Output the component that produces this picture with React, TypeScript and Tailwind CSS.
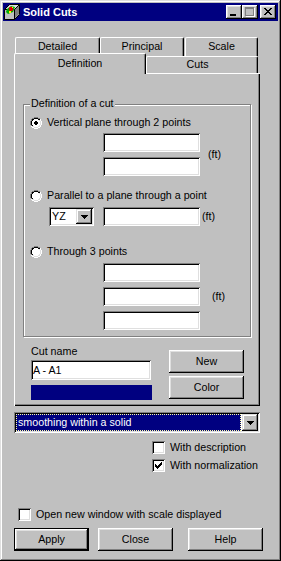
import React from "react";

type PixProps = { rows: string[]; colors: Record<string, string>; className?: string };

function Pix({ rows, colors, className }: PixProps) {
  const w = rows[0].length;
  const h = rows.length;
  const rects: React.ReactNode[] = [];
  rows.forEach((r, y) =>
    r.split("").forEach((c, x) => {
      if (colors[c]) rects.push(<rect key={x + "-" + y} x={x} y={y} width={1} height={1} fill={colors[c]} />);
    })
  );
  return (
    <svg width={w} height={h} viewBox={`0 0 ${w} ${h}`} shapeRendering="crispEdges" className={className}>
      {rects}
    </svg>
  );
}

const C = { K: "#000000", G: "#808080", W: "#ffffff", L: "#dfdfdf", w: "#ffffff" };

const radioOff = [
  "....GGGG....",
  "..GGKKKKGG..",
  ".GKKwwwwKKW.",
  ".GKwwwwwwLW.",
  "GKwwwwwwwwLW",
  "GKwwwwwwwwLW",
  "GKwwwwwwwwLW",
  "GKwwwwwwwwLW",
  ".GKwwwwwwLW.",
  ".WLLwwwwLLW.",
  "..WWLLLLWW..",
  "....WWWW....",
];
const radioOn = [
  "....GGGG....",
  "..GGKKKKGG..",
  ".GKKwwwwKKW.",
  ".GKwwwwwwLW.",
  "GKwwwKKwwwLW",
  "GKwwKKKKwwLW",
  "GKwwKKKKwwLW",
  "GKwwwKKwwwLW",
  ".GKwwwwwwLW.",
  ".WLLwwwwLLW.",
  "..WWLLLLWW..",
  "....WWWW....",
];

const checkRows = [
  "......K",
  ".....KK",
  "K...KKK",
  "KK.KKK.",
  "KKKKK..",
  ".KKK...",
  "..K....",
];

const arrowRows = ["KKKKKKK", ".KKKKK.", "..KKK..", "...K..."];

const minRows = [
  "................",
  "................",
  "................",
  "................",
  "................",
  "................",
  "................",
  "................",
  "................",
  "....KKKKKK......",
  "....KKKKKK......",
  "................",
  "................",
  "................",
];
const maxRows = [
  "................",
  "................",
  "...GGGGGGGGG....",
  "...GGGGGGGGGW...",
  "...G.......GW...",
  "...G.......GW...",
  "...G.......GW...",
  "...G.......GW...",
  "...G.......GW...",
  "...G.......GW...",
  "...GGGGGGGGGW...",
  "....WWWWWWWWW...",
  "................",
  "................",
];
const closeRows = [
  "................",
  "................",
  "................",
  "....KK....KK....",
  ".....KK..KK.....",
  "......KKKK......",
  ".......KK.......",
  "......KKKK......",
  ".....KK..KK.....",
  "....KK....KK....",
  "................",
  "................",
  "................",
  "................",
];

function Radio({ checked }: { checked?: boolean }) {
  return <Pix rows={checked ? radioOn : radioOff} colors={C} className="mt-[1px] shrink-0" />;
}

function CheckBox({ checked }: { checked?: boolean }) {
  return (
    <div className="w-[13px] h-[13px] shrink-0 bg-white shadow-[inset_1px_1px_0_#808080,inset_-1px_-1px_0_#fff,inset_2px_2px_0_#000,inset_-2px_-2px_0_#dfdfdf] pl-[3px] pt-[3px]">
      {checked && <Pix rows={checkRows} colors={C} className="block" />}
    </div>
  );
}

function Field({ children }: { children?: React.ReactNode }) {
  return (
    <div className="w-[97px] h-[19px] bg-white shadow-[inset_1px_1px_0_#808080,inset_-1px_-1px_0_#fff,inset_2px_2px_0_#000,inset_-2px_-2px_0_#dfdfdf] flex items-center pl-[2px]">
      {children}
    </div>
  );
}

function AppIcon() {
  return (
    <svg width="16" height="16" viewBox="0 0 16 16" className="shrink-0">
      <polygon points="0.5,5.5 5.5,0.5 15.5,0.5 15.5,10.5 10.5,15.5 0.5,15.5" fill="#c0c0c0" stroke="#000" />
      <polygon points="1,6 6,1 15,1 10,6" fill="#e0e0e0" />
      <polygon points="10,6 15,1 15,10 10,15" fill="#808080" />
      <polyline points="0.5,5.5 10.5,5.5 15.5,0.5" fill="none" stroke="#000" />
      <line x1="10.5" y1="5.5" x2="10.5" y2="15.5" stroke="#000" />
      <polygon points="3,5 7,2 11,3 9,8 4,10 2,8" fill="#00b000" />
      <circle cx="7" cy="5" r="2.2" fill="#e00000" />
      <rect x="5" y="7" width="2" height="2" fill="#ffff00" />
      <rect x="8" y="3" width="1" height="1" fill="#ffff00" />
    </svg>
  );
}

export default function App() {
  return (
    <div className="w-[281px] h-[561px] bg-[#c0c0c0] p-[3px] flex flex-col text-[10.7px] leading-[13px] text-black font-['Liberation_Sans',Arial,sans-serif] shadow-[inset_-1px_-1px_0_#000,inset_1px_1px_0_#dfdfdf,inset_-2px_-2px_0_#808080,inset_2px_2px_0_#fff] overflow-hidden">
      {/* Title bar */}
      <div className="h-[18px] shrink-0 bg-[#000080] flex items-center pl-[1px] pr-[2px]">
        <AppIcon />
        <span className="ml-[3px] text-white font-bold text-[11px]">Solid Cuts</span>
        <div className="ml-auto flex items-center">
          <div className="w-[16px] h-[14px] bg-[#c0c0c0] shadow-[inset_-1px_-1px_0_#000,inset_1px_1px_0_#fff,inset_-2px_-2px_0_#808080,inset_2px_2px_0_#dfdfdf]">
            <Pix rows={minRows} colors={C} className="block" />
          </div>
          <div className="w-[16px] h-[14px] bg-[#c0c0c0] shadow-[inset_-1px_-1px_0_#000,inset_1px_1px_0_#fff,inset_-2px_-2px_0_#808080,inset_2px_2px_0_#dfdfdf]">
            <Pix rows={maxRows} colors={C} className="block" />
          </div>
          <div className="ml-[2px] w-[16px] h-[14px] bg-[#c0c0c0] shadow-[inset_-1px_-1px_0_#000,inset_1px_1px_0_#fff,inset_-2px_-2px_0_#808080,inset_2px_2px_0_#dfdfdf]">
            <Pix rows={closeRows} colors={C} className="block" />
          </div>
        </div>
      </div>

      {/* Tabs back row */}
      <div className="mt-[16px] ml-[12px] flex h-[19px] shrink-0">
        <div className="w-[85px] h-full bg-[#c0c0c0] border-t border-l border-t-white border-l-white border-r border-r-black shadow-[inset_-1px_0_0_#808080] rounded-t-[2px] flex justify-center pt-[2px]">
          Detailed
        </div>
        <div className="w-[84px] h-full bg-[#c0c0c0] border-t border-l border-t-white border-l-white border-r border-r-black shadow-[inset_-1px_0_0_#808080] rounded-t-[2px] flex justify-center pt-[2px]">
          Principal
        </div>
        <div className="ml-[1px] w-[73px] h-full bg-[#c0c0c0] border-t border-l border-t-white border-l-white border-r border-r-black shadow-[inset_-1px_0_0_#808080] rounded-t-[2px] flex justify-center pt-[2px]">
          Scale
        </div>
      </div>
      {/* Tabs front row */}
      <div className="-mt-[3px] ml-[11px] flex items-start h-[20px] shrink-0">
        <div className="relative z-10 w-[132px] h-[21px] bg-[#c0c0c0] border-t border-l border-t-white border-l-white border-r border-r-black shadow-[inset_-1px_0_0_#808080] rounded-t-[2px] flex justify-center pt-[3px]">
          Definition
        </div>
        <div className="mt-[3px] w-[112px] h-[17px] bg-[#c0c0c0] border-t border-l border-t-white border-l-white border-r border-r-black shadow-[inset_-1px_0_0_#808080] rounded-t-[2px] flex justify-center pt-[1px] pr-[9px]">
          Cuts
        </div>
      </div>

      {/* Tab panel */}
      <div className="ml-[11px] w-[246px] h-[333px] shrink-0 flex flex-col shadow-[inset_1px_1px_0_#fff,inset_-1px_-1px_0_#000,inset_-2px_-2px_0_#808080]">
        <div className="relative ml-[9px] mt-[31px] w-[228px] h-[233px] border border-[#808080] shadow-[1px_1px_0_#fff,inset_1px_1px_0_#fff] pt-[11px] pl-[6px] flex flex-col">
          <span className="absolute left-[6px] -top-[8px] px-[1px] bg-[#c0c0c0]">Definition of a cut</span>

          <div className="flex items-start h-[13px]">
            <Radio checked />
            <span className="ml-[5px]">Vertical plane through 2 points</span>
          </div>
          <div className="mt-[4px] flex items-center">
            <div className="ml-[73px] flex flex-col gap-[5px]">
              <Field />
              <Field />
            </div>
            <span className="ml-[8px]">(ft)</span>
          </div>

          <div className="mt-[13px] flex items-start h-[13px]">
            <Radio />
            <span className="ml-[5px]">Parallel to a plane through a point</span>
          </div>
          <div className="mt-[5px] flex items-center">
            <div className="ml-[19px] w-[45px] h-[19px] bg-white shadow-[inset_1px_1px_0_#808080,inset_-1px_-1px_0_#fff,inset_2px_2px_0_#000,inset_-2px_-2px_0_#dfdfdf] p-[2px] flex items-center">
              <span className="pl-[1px]">YZ</span>
              <div className="ml-auto w-[16px] h-full bg-[#c0c0c0] shadow-[inset_-1px_-1px_0_#000,inset_1px_1px_0_#dfdfdf,inset_-2px_-2px_0_#808080,inset_2px_2px_0_#fff] flex items-center justify-center">
                <Pix rows={arrowRows} colors={C} className="block" />
              </div>
            </div>
            <div className="ml-[9px]">
              <Field />
            </div>
            <span className="ml-[2px]">(ft)</span>
          </div>

          <div className="mt-[19px] flex items-start h-[13px]">
            <Radio />
            <span className="ml-[5px]">Through 3 points</span>
          </div>
          <div className="mt-[5px] flex items-center">
            <div className="ml-[73px] flex flex-col gap-[5px]">
              <Field />
              <Field />
              <Field />
            </div>
            <span className="ml-[12px]">(ft)</span>
          </div>
        </div>

        <div className="ml-[17px] flex">
          <div className="flex flex-col pt-[8px]">
            <span>Cut name</span>
            <div className="mt-[2px] w-[120px] h-[20px] bg-white shadow-[inset_1px_1px_0_#808080,inset_-1px_-1px_0_#fff,inset_2px_2px_0_#000,inset_-2px_-2px_0_#dfdfdf] flex items-center pl-[2px]">
              A - A1
            </div>
            <div className="mt-[5px] w-[121px] h-[15px] bg-[#000080]" />
          </div>
          <div className="ml-[17px] flex flex-col gap-[3px] pt-[13px]">
            <div className="w-[75px] h-[23px] bg-[#c0c0c0] shadow-[inset_-1px_-1px_0_#000,inset_1px_1px_0_#fff,inset_-2px_-2px_0_#808080,inset_2px_2px_0_#dfdfdf] flex items-center justify-center">
              New
            </div>
            <div className="w-[75px] h-[23px] bg-[#c0c0c0] shadow-[inset_-1px_-1px_0_#000,inset_1px_1px_0_#fff,inset_-2px_-2px_0_#808080,inset_2px_2px_0_#dfdfdf] flex items-center justify-center">
              Color
            </div>
          </div>
        </div>
      </div>

      {/* Dropdown */}
      <div className="mt-[6px] ml-[11px] w-[246px] h-[21px] shrink-0 bg-white shadow-[inset_1px_1px_0_#808080,inset_-1px_-1px_0_#fff,inset_2px_2px_0_#000,inset_-2px_-2px_0_#dfdfdf] p-[2px] flex">
        <div className="w-[225px] h-full bg-[#000080] text-white border border-dotted border-[#ffffa0] flex items-center pl-[1px]">
          smoothing within a solid
        </div>
        <div className="ml-auto w-[16px] h-full bg-[#c0c0c0] shadow-[inset_-1px_-1px_0_#000,inset_1px_1px_0_#dfdfdf,inset_-2px_-2px_0_#808080,inset_2px_2px_0_#fff] flex items-center justify-center">
          <Pix rows={arrowRows} colors={C} className="block" />
        </div>
      </div>

      {/* Checkboxes */}
      <div className="mt-[8px] ml-[149px] flex flex-col gap-[5px] shrink-0">
        <div className="flex items-center h-[13px]">
          <CheckBox />
          <span className="ml-[5px]">With description</span>
        </div>
        <div className="flex items-center h-[13px]">
          <CheckBox checked />
          <span className="ml-[5px]">With normalization</span>
        </div>
      </div>

      <div className="mt-[36px] ml-[15px] flex items-center h-[13px] shrink-0">
        <CheckBox />
        <span className="ml-[5px]">Open new window with scale displayed</span>
      </div>

      {/* Buttons */}
      <div className="mt-[7px] ml-[11px] flex shrink-0">
        <div className="w-[75px] h-[23px] border border-black bg-[#c0c0c0] shadow-[inset_-1px_-1px_0_#000,inset_1px_1px_0_#fff,inset_-2px_-2px_0_#808080,inset_2px_2px_0_#dfdfdf] flex items-center justify-center">
          Apply
        </div>
        <div className="ml-[9px] w-[75px] h-[23px] bg-[#c0c0c0] shadow-[inset_-1px_-1px_0_#000,inset_1px_1px_0_#fff,inset_-2px_-2px_0_#808080,inset_2px_2px_0_#dfdfdf] flex items-center justify-center">
          Close
        </div>
        <div className="ml-[15px] w-[75px] h-[23px] bg-[#c0c0c0] shadow-[inset_-1px_-1px_0_#000,inset_1px_1px_0_#fff,inset_-2px_-2px_0_#808080,inset_2px_2px_0_#dfdfdf] flex items-center justify-center">
          Help
        </div>
      </div>
    </div>
  );
}
